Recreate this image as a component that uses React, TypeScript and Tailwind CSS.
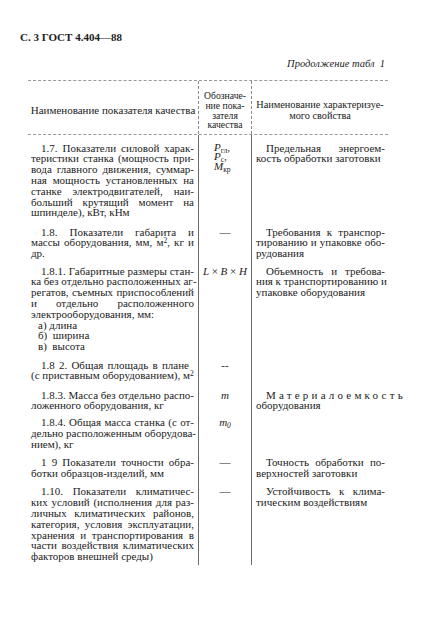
import React from "react";

type Line = React.ReactNode;

// paragraph with hand-set line breaks, justified like the printed page
function Para({ lines, indent = true, className = "" }: { lines: Line[]; indent?: boolean; className?: string }) {
  return (
    <div className={className}>
      {lines.map((l, i) => {
        const last = i === lines.length - 1;
        return (
          <div
            key={i}
            className={
              "whitespace-nowrap " +
              (last ? "text-left " : "text-justify [text-align-last:justify] ") +
              (i === 0 && indent ? "pl-[10px]" : "")
            }
          >
            {l}
          </div>
        );
      })}
    </div>
  );
}

function Row({
  pt,
  left,
  mid,
  right,
  pb = 0,
}: {
  pt: number;
  left: React.ReactNode;
  mid?: React.ReactNode;
  right?: React.ReactNode;
  pb?: number;
}) {
  return (
    <div className="grid grid-cols-[171px_52px_137px]">
      <div className="border-r border-[#6b6b6b] pl-[3px] pr-[4px]" style={{ paddingTop: pt, paddingBottom: pb }}>
        {left}
      </div>
      <div style={{ paddingTop: pt }}>{mid}</div>
      <div className="border-l border-[#6b6b6b] pl-[4px] pr-[3px]" style={{ paddingTop: pt }}>
        {right}
      </div>
    </div>
  );
}

const Dash = () => <div className="text-center">—</div>;

// small lowered index, kept out of the line box so the stack stays tight
const Idx = ({ children }: { children: React.ReactNode }) => (
  <span className="relative top-[2px] text-[7.5px] leading-none">{children}</span>
);

export default function App() {
  return (
    <div className="h-[633px] w-[430px] bg-white pt-[30px] font-['Liberation_Serif',serif] text-[#1c1c1c]">
      <div className="pl-[20px] text-[11px] font-bold leading-[14px]">С. 3 ГОСТ 4.404—88</div>
      <div className="mt-[13px] pr-[45px] text-right text-[10.5px] italic leading-[14px]">
        Продолжение табл&nbsp;&nbsp;1
      </div>

      <div className="ml-[28px] mt-[9px] w-[360px] text-[11px] leading-[10.8px]">
        {/* header */}
        <div className="grid h-[55px] grid-cols-[171px_52px_137px] border-y border-dashed border-[#9a9a9a]">
          <div className="flex items-center justify-center whitespace-nowrap border-r border-dashed border-[#8a8a8a] pt-[5px] text-[11px]">
            Наименование показателя качества
          </div>
          <div className="flex flex-col items-center justify-center pt-[6px] text-[9.7px] leading-[9.8px]">
            <div>Обозначе-</div>
            <div>ние пока-</div>
            <div>зателя</div>
            <div>качества</div>
          </div>
          <div className="flex flex-col items-center justify-center whitespace-nowrap border-l border-dashed border-[#8a8a8a] pt-[5px] text-[10.3px] leading-[11px]">
            <div>Наименование характеризуе-</div>
            <div>мого свойства</div>
          </div>
        </div>

        <Row
          pt={7.6}
          left={
            <Para
              lines={[
                "1.7. Показатели силовой харак-",
                "теристики станка (мощность при-",
                "вода главного движения, суммар-",
                "ная мощность установленных на",
                "станке электродвигателей, наи-",
                "больший крутящий момент на",
                "шпинделе), кВт, кНм",
              ]}
            />
          }
          mid={
            <div className="pl-[15px] leading-[9.3px]">
              <div>
                <i>P</i>
                <Idx>гл</Idx>,
              </div>
              <div>
                <i>P</i>
                <Idx>с</Idx>,
              </div>
              <div>
                <i>M</i>
                <Idx>кр</Idx>
              </div>
            </div>
          }
          right={<Para lines={["Предельная энергоем-", "кость обработки заготовки"]} />}
        />

        <Row
          pt={8.4}
          left={
            <Para
              lines={[
                "1.8. Показатели габарита и",
                <>
                  массы оборудования, мм, м<sup className="text-[7.5px]">2</sup>, кг и
                </>,
                "др.",
              ]}
            />
          }
          mid={<Dash />}
          right={<Para lines={["Требования к транспор-", "тированию и упаковке обо-", "рудования"]} />}
        />

        <Row
          pt={6.6}
          left={
            <>
              <Para
                lines={[
                  "1.8.1. Габаритные размеры стан-",
                  "ка без отдельно расположенных аг-",
                  "регатов, съемных приспособлений",
                  "и отдельно расположенного",
                  "электрооборудования, мм:",
                ]}
              />
              <div className="pl-[7px]">
                <div>а) длина</div>
                <div>б)&nbsp; ширина</div>
                <div>в)&nbsp; высота</div>
              </div>
            </>
          }
          mid={
            <div className="text-center italic">
              L <span className="not-italic">×</span> B <span className="not-italic">×</span> H
            </div>
          }
          right={<Para lines={["Объемность и требова-", "ния к транспортированию и", "упаковке оборудования"]} />}
        />

        <Row
          pt={7.6}
          left={
            <Para
              className="w-[158px]"
              lines={[
                "1.8 2. Общая площадь в плане",
                <>
                  (с приставным оборудованием), м<sup className="text-[7.5px]">2</sup>
                </>,
              ]}
            />
          }
          mid={<div className="text-center">--</div>}
        />

        <Row
          pt={8.4}
          left={<Para lines={["1.8.3. Масса без отдельно распо-", "ложенного оборудования, кг"]} />}
          mid={<div className="text-center italic">m</div>}
          right={
            <>
              <div className="pl-[10px] tracking-[3.2px] whitespace-nowrap">Материалоемкость</div>
              <div>оборудования</div>
            </>
          }
        />

        <Row
          pt={6.4}
          left={
            <Para
              lines={["1.8.4. Общая масса станка (с от-", "дельно расположенным оборудова-", "нием), кг"]}
            />
          }
          mid={
            <div className="text-center italic">
              m<Idx>0</Idx>
            </div>
          }
        />

        <Row
          pt={7.6}
          left={<Para lines={["1 9 Показатели точности обра-", "ботки образцов-изделий, мм"]} />}
          mid={<Dash />}
          right={<Para lines={["Точность обработки по-", "верхностей заготовки"]} />}
        />

        <Row
          pt={7.4}
          pb={3}
          left={
            <Para
              lines={[
                "1.10. Показатели климатичес-",
                "ких условий (исполнения для раз-",
                "личных климатических районов,",
                "категория, условия эксплуатации,",
                "хранения и транспортирования в",
                "части воздействия климатических",
                "факторов внешней среды)",
              ]}
            />
          }
          mid={<Dash />}
          right={<Para lines={["Устойчивость к клима-", "тическим воздействиям"]} />}
        />
      </div>
    </div>
  );
}
